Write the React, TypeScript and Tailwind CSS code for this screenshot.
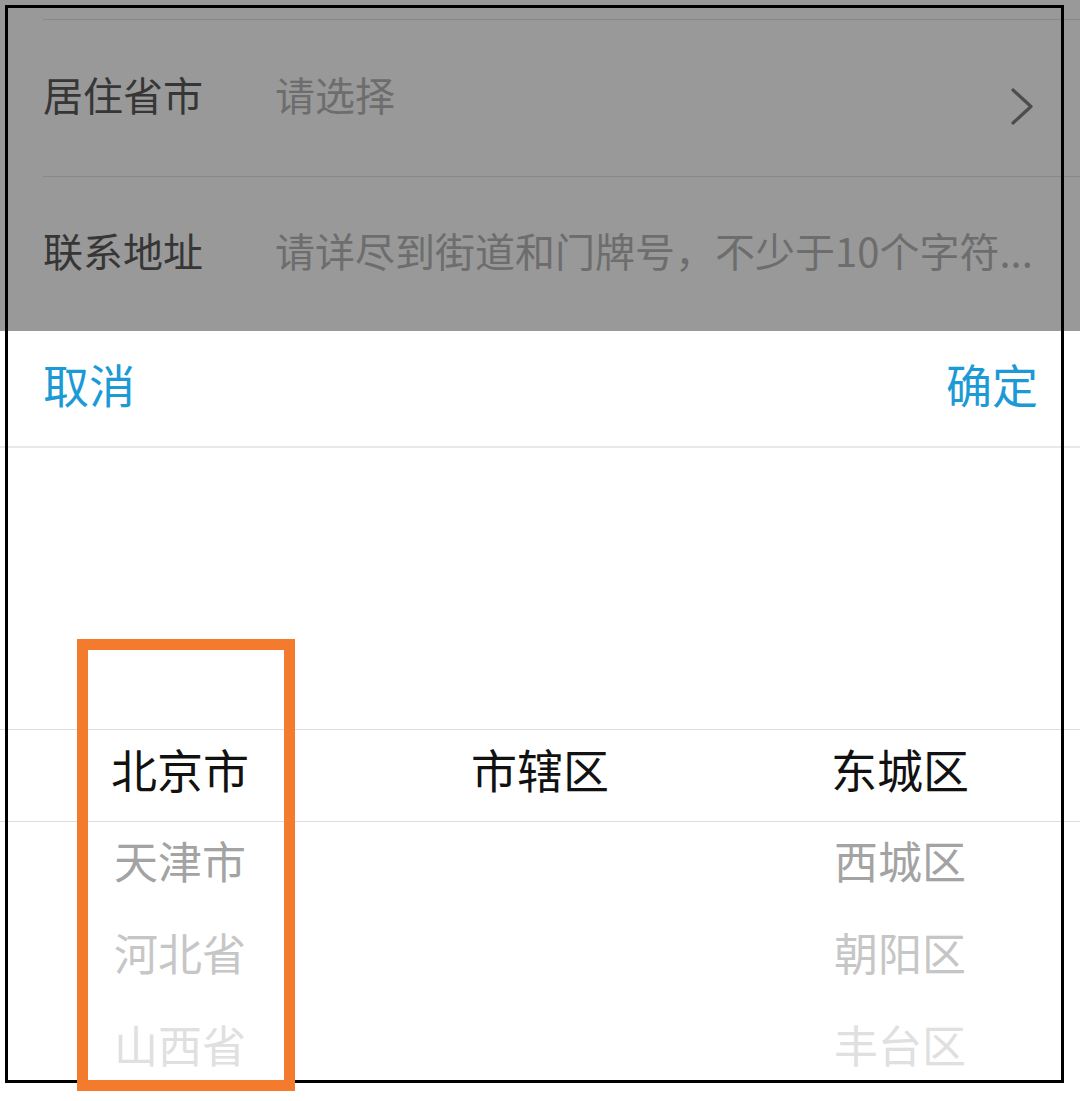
type Row = { label: string; placeholder: string; arrow?: boolean };

const formRows: Row[] = [
  { label: '居住省市', placeholder: '请选择', arrow: true },
  { label: '联系地址', placeholder: '请详尽到街道和门牌号，不少于10个字符...' },
];

const provinces = ['北京市', '天津市', '河北省', '山西省'];
const cities = ['市辖区', '', '', ''];
const districts = ['东城区', '西城区', '朝阳区', '丰台区'];

// fade out the further an item is from the selection band
const fade = ['text-[#111111] text-[46px]', 'text-[#a3a3a3] text-[44px]', 'text-[#c6c6c6] text-[44px]', 'text-[#e0e0e0] text-[44px]'];

function Chevron() {
  return (
    <svg className="ml-auto mr-[46px] mt-[18px] h-[40px] w-[24px] shrink-0" viewBox="0 0 24 40" fill="none">
      <path d="M3 3 L21 19.5 L3 36" stroke="#4d4d4d" strokeWidth={3.2} strokeLinecap="round" strokeLinejoin="round" />
    </svg>
  );
}

function FormRow({ row, last }: { row: Row; last?: boolean }) {
  return (
    <div
      className={`ml-[43px] flex items-center ${last ? 'h-[154px]' : 'h-[157px] border-b border-[#888888]'}`}
    >
      <span className="w-[232px] shrink-0 pb-[8px] text-[40px] leading-none text-[#363636]">{row.label}</span>
      <span className="whitespace-nowrap pb-[8px] text-[40px] leading-none text-[#6d6d6d]">{row.placeholder}</span>
      {row.arrow && <Chevron />}
    </div>
  );
}

export default function App() {
  return (
    <div className="relative h-[1101px] w-[1080px] overflow-hidden bg-white font-['Noto_Sans_CJK_SC','Noto_Sans',sans-serif]">
      {/* dimmed form behind the sheet */}
      <div className="h-[331px] bg-[#999999]">
        <div className="ml-[43px] h-[20px] border-b border-[#888888]" />
        {formRows.map((row, i) => (
          <FormRow key={row.label} row={row} last={i === formRows.length - 1} />
        ))}
      </div>

      {/* picker sheet */}
      <div className="flex h-[117px] items-center justify-between border-b-2 border-[#e8e8e8] pb-[12px] pl-[43px] pr-[42px]">
        <button className="text-[46px] leading-none text-[#1b9ad6]">取消</button>
        <button className="text-[46px] leading-none text-[#1b9ad6]">确定</button>
      </div>

      <div className="pt-[281px]">
        {provinces.map((p, i) => (
          <div
            key={p}
            className={`grid grid-cols-3 items-center pb-[16px] ${i === 0 ? 'h-[93px] border-y border-[#dedede]' : 'h-[92px]'}`}
          >
            <span className={`text-center leading-none ${fade[i]}`}>{p}</span>
            <span className={`text-center leading-none ${fade[i]}`}>{cities[i]}</span>
            <span className={`text-center leading-none ${fade[i]}`}>{districts[i]}</span>
          </div>
        ))}
      </div>

      {/* annotation frames */}
      <div className="pointer-events-none absolute left-[5px] top-[5px] h-[1078px] w-[1059px] border-[3px] border-black" />
      <div className="pointer-events-none absolute left-[77px] top-[639px] h-[452px] w-[218px] border-[11px] border-[#f47b2e]" />
    </div>
  );
}
